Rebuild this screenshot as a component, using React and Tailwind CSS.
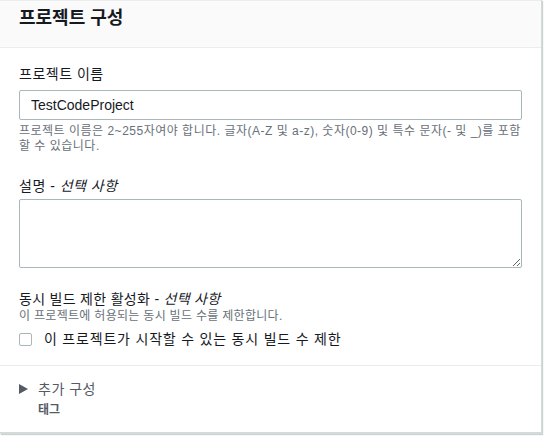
import React from 'react';

const font = { fontFamily: '"Liberation Sans", "Noto Sans CJK KR", sans-serif' };

const App = () => {
  return (
    <div className="w-[546px] h-[436px] bg-white overflow-hidden" style={font}>
      <div className="w-[542px] h-[434px] bg-white border-r border-b-2 border-[#d5dbdb] shadow-[1px_1px_1px_rgba(0,28,36,0.2)] flex flex-col">
        {/* Header */}
        <div className="h-[48px] bg-[#fafafa] border-t border-b border-[#eaeded] px-[19px] pt-[3px]">
          <h2 className="text-[18px] leading-[28px] font-bold text-[#16191f]">프로젝트 구성</h2>
        </div>

        {/* Body */}
        <div className="px-[19px] pt-[16px] flex flex-col">
          <label className="text-[14px] leading-[20px] tracking-[0.5px] text-[#16191f]">프로젝트 이름</label>
          <input
            type="text"
            defaultValue="TestCodeProject"
            className="mt-[6px] h-[30px] w-[503px] border border-[#aab7b8] rounded-[2px] px-[11px] text-[14px] text-[#16191f] outline-none"
          />
          <p className="mt-[4px] text-[12px] leading-[15px] tracking-[0.5px] text-[#687078] w-[503px]">
            프로젝트 이름은 2~255자여야 합니다. 글자(A-Z 및 a-z), 숫자(0-9) 및 특수 문자(- 및 _)를 포함할 수 있습니다.
          </p>

          <label className="mt-[22px] text-[14px] leading-[20px] tracking-[0.5px] text-[#16191f]">
            설명 - <i>선택 사항</i>
          </label>
          <textarea className="mt-[3px] h-[69px] w-[503px] border border-[#aab7b8] rounded-[2px] px-[11px] py-[4px] text-[14px] outline-none resize-y" />

          <label className="mt-[21px] text-[14px] leading-[20px] tracking-[0.3px] text-[#16191f]">
            동시 빌드 제한 활성화 - <i>선택 사항</i>
          </label>
          <p className="text-[12px] leading-[15px] tracking-[0.3px] text-[#687078]">이 프로젝트에 허용되는 동시 빌드 수를 제한합니다.</p>
          <div className="mt-[5px] flex items-center gap-[12px]">
            <span className="w-[13px] h-[13px] border border-[#aab7b8] rounded-[2px] bg-white" />
            <span className="text-[14px] leading-[20px] tracking-[0.8px] text-[#16191f]">이 프로젝트가 시작할 수 있는 동시 빌드 수 제한</span>
          </div>
        </div>

        {/* Additional config */}
        <div className="mt-[16px] border-t border-[#eaeded] px-[19px] pt-[13px]">
          <div className="flex items-center gap-[10px]">
            <svg width="9" height="10" viewBox="0 0 9 10">
              <path d="M0 0 L9 5 L0 10 Z" fill="#545b64" />
            </svg>
            <span className="text-[14px] leading-[20px] tracking-[0.5px] text-[#545b64]">추가 구성</span>
          </div>
          <div className="mt-[2px] pl-[19px] text-[12px] leading-[18px] font-bold text-[#545b64]">태그</div>
        </div>
      </div>
    </div>
  );
};

export default App;
